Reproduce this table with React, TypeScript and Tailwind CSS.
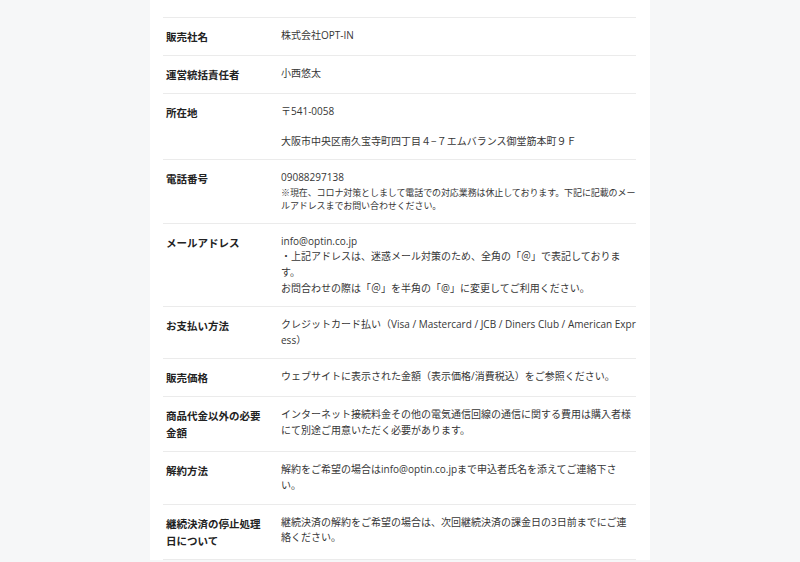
import type { ReactNode } from "react";

interface Row {
  label: string;
  value: ReactNode;
}

const rows: Row[] = [
  { label: "販売社名", value: "株式会社OPT-IN" },
  { label: "運営統括責任者", value: "小西悠太" },
  {
    label: "所在地",
    value: (
      <>
        〒541-0058
        <div className="h-[14px]" />
        大阪市中央区南久宝寺町四丁目４−７エムバランス御堂筋本町９Ｆ
      </>
    ),
  },
  {
    label: "電話番号",
    value: (
      <>
        09088297138
        <span className="block text-[9px] leading-[13.5px] tracking-[-0.1px]">
          ※現在、コロナ対策としまして電話での対応業務は休止しております。下記に記載のメールアドレスまでお問い合わせください。
        </span>
      </>
    ),
  },
  {
    label: "メールアドレス",
    value: (
      <>
        info@optin.co.jp
        <br />
        ・上記アドレスは、迷惑メール対策のため、全角の「＠」で表記しております。
        <br />
        お問合わせの際は「＠」を半角の「@」に変更してご利用ください。
      </>
    ),
  },
  {
    label: "お支払い方法",
    value: "クレジットカード払い（Visa / Mastercard / JCB / Diners Club / American Express）",
  },
  { label: "販売価格", value: "ウェブサイトに表示された金額（表示価格/消費税込）をご参照ください。" },
  {
    label: "商品代金以外の必要金額",
    value: "インターネット接続料金その他の電気通信回線の通信に関する費用は購入者様にて別途ご用意いただく必要があります。",
  },
  { label: "解約方法", value: "解約をご希望の場合はinfo@optin.co.jpまで申込者氏名を添えてご連絡下さい。" },
  {
    label: "継続決済の停止処理日について",
    value: "継続決済の解約をご希望の場合は、次回継続決済の課金日の3日前までにご連絡ください。",
  },
];

export default function App() {
  return (
    <div className="min-h-screen bg-[#f6f7f8] font-['Open_Sans','Noto_Sans_CJK_JP',sans-serif]">
      <div className="mx-auto w-[500px] bg-white pl-[13px] pr-[14px] pt-[17px]">
        {rows.map((row) => (
          <div key={row.label} className="flex border-t border-[#ebebeb] pb-[10px] pt-[10px]">
            <div className="w-[118px] shrink-0 pl-[3px] pr-[18px] font-['Noto_Sans_CJK_JP',sans-serif] text-[10.5px] font-bold leading-[17px] text-[#222]">
              {row.label}
            </div>
            <div className="w-[355px] break-all text-[10px] leading-[15.6px] text-[#363636]">
              {row.value}
            </div>
          </div>
        ))}
        <div className="border-t border-[#ebebeb]" />
      </div>
    </div>
  );
}
